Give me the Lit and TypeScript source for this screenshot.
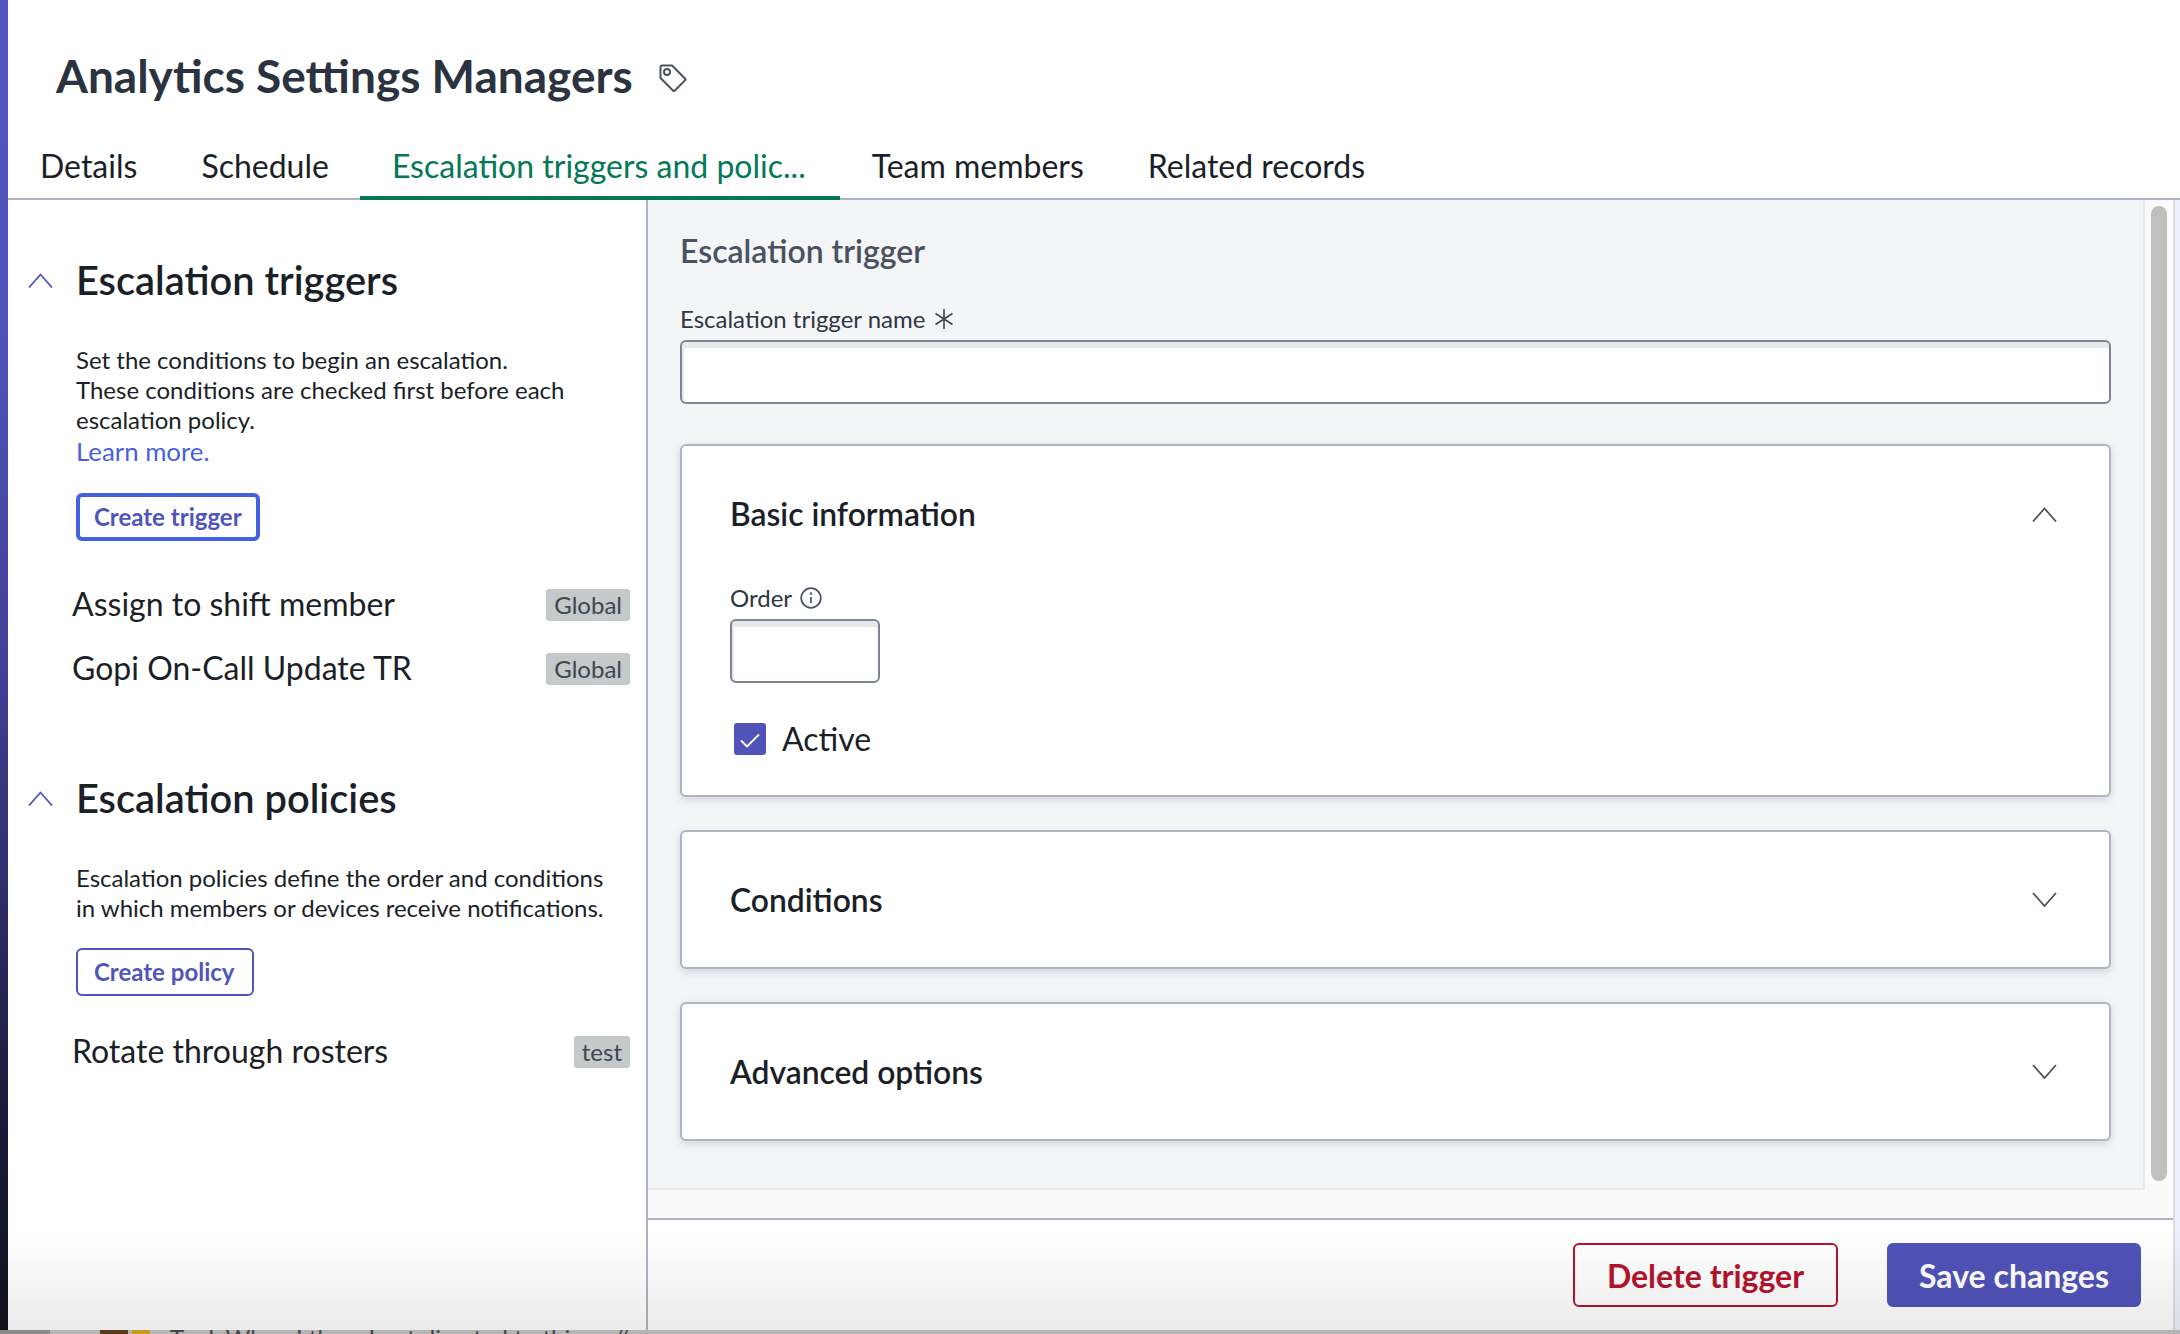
import { LitElement, css, html, svg } from 'lit'
import { customElement } from 'lit/decorators.js'

const chevron = (up: boolean, cls: string) => html`
  <svg class=${cls} viewBox="0 0 25 15" fill="none" stroke="currentColor" stroke-width="1.8">
    ${up ? svg`<path d="M1 14.5 12.5 1.5 24 14.5" />` : svg`<path d="M1 1 12.5 14 24 1" />`}
  </svg>
`

const tagIcon = html`
  <svg class="tag" viewBox="0 0 28 28" fill="none" stroke="#4a5260" stroke-width="2" stroke-linejoin="round">
    <path d="M3 1.5h10l13.2 13.2a1 1 0 0 1 0 1.4L15.6 26.7a1 1 0 0 1-1.4 0L1.5 14V3A1.5 1.5 0 0 1 3 1.5z" />
    <circle cx="8" cy="8" r="3" />
  </svg>
`

const asterisk = html`
  <svg class="asterisk" viewBox="0 0 20 20" fill="none" stroke="#3f4652" stroke-width="1.6">
    <path d="M10 0v20M1.5 4.5l17 11M18.5 4.5l-17 11" />
  </svg>
`

const infoIcon = html`
  <svg class="info" viewBox="0 0 22 22" fill="none" stroke="#4a5260" stroke-width="1.7">
    <circle cx="11" cy="11" r="9.8" />
    <path d="M11 10v6" />
    <circle cx="11" cy="6.6" r="0.5" />
  </svg>
`

const checkIcon = html`
  <svg class="check" viewBox="0 0 32 32" fill="none" stroke="#fff" stroke-width="1.8">
    <path d="M7 17.5 13 23.5 25 11.5" />
  </svg>
`

@customElement('app-root')
export class AppRoot extends LitElement {
  static styles = css`
    :host {
      display: block;
      width: 2180px;
      height: 1334px;
      overflow: hidden;
      font-family: 'Lato', 'Liberation Sans', sans-serif;
      color: #1b1f28;
      background: #fff;
    }
    * { box-sizing: border-box; }

    .app {
      position: relative;
      display: flex;
      height: 1330px;
    }
    .strip {
      width: 8px;
      flex: none;
      background: linear-gradient(#5256c0 0, #4f53b8 25%, #3e3f92 52%, #1c1c3e 82%, #10111a 100%);
    }
    .main {
      flex: 1;
      display: flex;
      flex-direction: column;
      min-width: 0;
    }
    .fade {
      position: absolute;
      left: 8px;
      right: 0;
      bottom: 0;
      height: 100px;
      pointer-events: none;
      background: linear-gradient(rgba(0, 0, 0, 0), rgba(0, 0, 0, 0.08));
    }

    .head { flex: none; border-bottom: 2px solid #b0b4c0; height: 200px; }
    .title-row {
      display: flex;
      align-items: center;
      gap: 26px;
      padding: 48px 0 0 48px;
    }
    h1 {
      margin: 0;
      font-size: 46px;
      line-height: 56px;
      font-weight: 700;
      color: #2b3240;
    }
    .tag { width: 28px; height: 28px; flex: none; margin-top: 4px; }
    .tabs { display: flex; padding-top: 42px; }
    .tab {
      padding: 0 32px 10px;
      font-size: 32px;
      line-height: 40px;
      color: #1b1f28;
      border-bottom: 4px solid transparent;
      height: 54px;
    }
    .tab.active {
      margin-left: -1px;
      padding: 0 34px 10px 32px;
      color: #047857;
      border-bottom-color: #047857;
    }

    .body { flex: 1; display: flex; min-height: 0; }
    .left {
      width: 640px;
      flex: none;
      border-right: 2px solid #b0b4c0;
      padding: 55px 16px 0 0;
    }
    .sec-head {
      display: flex;
      align-items: center;
      padding-left: 20px;
      height: 50px;
    }
    .sec-head h2 {
      margin: 0 0 0 23px;
      font-size: 39.8px;
      font-weight: 600;
      line-height: 50px;
      color: #1b1f28;
    }
    .sec-chev { width: 25px; height: 15px; color: #5055bb; }
    .sec { padding-left: 68px; }
    .para {
      margin: 40px 0 0;
      font-size: 24px;
      line-height: 30px;
      color: #1b1f28;
    }
    .para a {
      display: block;
      margin-top: 1px;
      font-size: 25.8px;
      line-height: 31px;
      color: #4a5fe0;
    }
    .btn {
      display: inline-block;
      font: 700 24px/36px 'Lato', 'Liberation Sans', sans-serif;
      color: #5055bb;
      background: #fff;
      padding: 4px 18px 4px 16px;
      height: 48px;
      border: 2px solid #5055bb;
      border-radius: 6px;
    }
    .btn.focused { border: 4px solid #4361e0; padding: 2px 14px; margin-top: 26px; }
    .btn.plain { margin-top: 25px; }
    .list { margin: 32px 0 0 -4px; }
    .list.tight { margin-top: 24px; }
    .item {
      display: flex;
      align-items: center;
      justify-content: space-between;
      height: 64px;
    }
    .item span.name { font-size: 32px; line-height: 40px; padding-bottom: 2px; }
    .badge {
      font-size: 24px;
      line-height: 32px;
      height: 32px;
      padding: 0 8px;
      border-radius: 3px;
      background: #c4c9c9;
      color: #3f4650;
    }
    .sec + .sec-head { margin-top: 72px; }

    .right {
      flex: 1;
      display: flex;
      flex-direction: column;
      min-width: 0;
      background: #eeeffa;
    }
    .right-inner {
      width: 1527px;
      flex: 1;
      display: flex;
      flex-direction: column;
      border-right: 2px solid #dcdde3;
      background: #fff;
    }
    .scroll-area { display: flex; height: 1018px; background: #fafafa; flex: none; }
    .content {
      width: 1497px;
      height: 990px;
      flex: none;
      background: #f4f5f7;
      border-right: 2px solid #e9e9ec;
      border-bottom: 2px solid #e9e9ec;
      padding: 31px 32px 0;
    }
    .track { flex: 1; padding: 6px 6px 37px 6px; }
    .thumb { width: 16px; height: 100%; border-radius: 8px; background: #c0c0c0; }
    .content h3 {
      margin: 0;
      font-size: 32px;
      line-height: 40px;
      font-weight: 600;
      color: #4a5260;
    }
    .label {
      display: flex;
      align-items: center;
      font-size: 24px;
      line-height: 30px;
      color: #2f3644;
    }
    .label.name-label { margin-top: 33px; }
    .asterisk { width: 20px; height: 20px; margin-left: 9px; }
    .info { width: 22px; height: 22px; margin-left: 8px; }
    .input {
      height: 64px;
      margin-top: 6px;
      background: #fff;
      border: 2px solid #7d8594;
      border-radius: 6px;
      box-shadow: inset 0 6px 0 #e8e9ea, inset 2px 0 0 #e8e9ea;
    }
    .input.small { width: 150px; }
    .card {
      background: #fff;
      border: 2px solid #b0b4c0;
      border-radius: 6px;
      box-shadow: 0 3px 8px rgba(60, 66, 90, 0.18);
      padding: 48px 52px 0 48px;
    }
    .card.open { margin-top: 40px; height: 353px; }
    .card.closed {
      margin-top: 33px;
      height: 139px;
      padding-top: 0;
      display: flex;
      align-items: center;
    }
    .card-head {
      flex: 1;
      display: flex;
      align-items: center;
      justify-content: space-between;
      height: 40px;
    }
    .card-title { font-size: 31.8px; line-height: 40px; font-weight: 600; color: #1b1f28; }
    .card-chev { width: 25px; height: 15px; color: #4a5260; }
    .order { margin-top: 49px; }
    .active-row {
      display: flex;
      align-items: center;
      margin: 40px 0 0 4px;
      height: 32px;
      font-size: 32px;
      line-height: 40px;
      color: #1b1f28;
    }
    .box {
      width: 32px;
      height: 32px;
      margin-right: 16px;
      border-radius: 3px;
      background: #5054b9;
    }
    .check { display: block; width: 32px; height: 32px; }

    .foot {
      flex: 1;
      display: flex;
      justify-content: flex-end;
      gap: 49px;
      padding: 23px 32px 0 0;
      border-top: 2px solid #b0b4c0;
    }
    .action {
      height: 64px;
      font: 700 32px/60px 'Lato', 'Liberation Sans', sans-serif;
      border-radius: 6px;
      border: 2px solid;
      text-align: center;
    }
    .action.delete { width: 265px; color: #b5142e; border-color: #b5142e; background: #fff; }
    .action.save { width: 254px; color: #fff; border-color: #5053b8; background: #5053b8; }

    .under {
      position: relative;
      height: 4px;
      overflow: hidden;
      background: #b4b4b4;
      color: #444;
      display: flex;
    }
    .under .dark { width: 50px; background: #8a8a8a; }
    .under .pic { margin-left: 50px; width: 50px; display: flex; gap: 4px; }
    .under .pic i { flex: 1; background: #5a3a1c; }
    .under .pic i + i { flex: none; width: 18px; background: #c9981e; }
    .under .txt {
      margin-left: 20px;
      font-size: 24px;
      line-height: 24px;
      white-space: nowrap;
      margin-top: -4px;
    }
  `

  render() {
    return html`
      <div class="app">
        <div class="strip"></div>
        <div class="main">
          <div class="head">
            <div class="title-row">
              <h1>Analytics Settings Managers</h1>
              ${tagIcon}
            </div>
            <div class="tabs">
              <div class="tab">Details</div>
              <div class="tab">Schedule</div>
              <div class="tab active">Escalation triggers and polic...</div>
              <div class="tab">Team members</div>
              <div class="tab">Related records</div>
            </div>
          </div>
          <div class="body">
            <div class="left">
              <div class="sec-head">
                ${chevron(true, 'sec-chev')}
                <h2>Escalation triggers</h2>
              </div>
              <div class="sec">
                <p class="para">
                  Set the conditions to begin an escalation.<br />
                  These conditions are checked first before each<br />
                  escalation policy.
                  <a>Learn more.</a>
                </p>
                <button class="btn focused">Create trigger</button>
                <div class="list">
                  <div class="item"><span class="name">Assign to shift member</span><span class="badge">Global</span></div>
                  <div class="item"><span class="name">Gopi On-Call Update TR</span><span class="badge">Global</span></div>
                </div>
              </div>
              <div class="sec-head">
                ${chevron(true, 'sec-chev')}
                <h2>Escalation policies</h2>
              </div>
              <div class="sec">
                <p class="para">
                  Escalation policies define the order and conditions<br />
                  in which members or devices receive notifications.
                </p>
                <button class="btn plain">Create policy</button>
                <div class="list tight">
                  <div class="item"><span class="name">Rotate through rosters</span><span class="badge">test</span></div>
                </div>
              </div>
            </div>
            <div class="right">
              <div class="right-inner">
                <div class="scroll-area">
                  <div class="content">
                    <h3>Escalation trigger</h3>
                    <div class="label name-label">Escalation trigger name ${asterisk}</div>
                    <div class="input"></div>
                    <div class="card open">
                      <div class="card-head">
                        <span class="card-title">Basic information</span>
                        ${chevron(true, 'card-chev')}
                      </div>
                      <div class="label order">Order ${infoIcon}</div>
                      <div class="input small"></div>
                      <div class="active-row"><span class="box">${checkIcon}</span>Active</div>
                    </div>
                    <div class="card closed">
                      <div class="card-head">
                        <span class="card-title">Conditions</span>
                        ${chevron(false, 'card-chev')}
                      </div>
                    </div>
                    <div class="card closed">
                      <div class="card-head">
                        <span class="card-title">Advanced options</span>
                        ${chevron(false, 'card-chev')}
                      </div>
                    </div>
                  </div>
                  <div class="track"><div class="thumb"></div></div>
                </div>
                <div class="foot">
                  <button class="action delete">Delete trigger</button>
                  <button class="action save">Save changes</button>
                </div>
              </div>
            </div>
          </div>
        </div>
        <div class="fade"></div>
      </div>
      <div class="under">
        <div class="dark"></div>
        <div class="pic"><i></i><i></i></div>
        <div class="txt">Tool. When I then, I got directed to things //</div>
      </div>
    `
  }
}
